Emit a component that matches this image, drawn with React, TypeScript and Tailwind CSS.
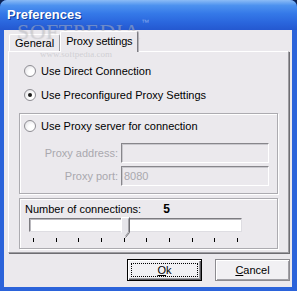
import React from "react";

const font = { fontFamily: '"Liberation Sans", Arial, sans-serif' };

function Radio({ label, checked }: { label: string; checked?: boolean }) {
  return (
    <div className="flex items-center h-[16px]">
      <span className="relative w-[12px] h-[12px] rounded-full border border-[#8f8e94] bg-[radial-gradient(circle_at_65%_65%,#ffffff_30%,#dcdbe0_100%)] flex items-center justify-center">
        {checked && <span className="w-[4px] h-[4px] rounded-full bg-[#1c1c1c]" />}
      </span>
      <span className="ml-[5px] text-[11px] text-black">{label}</span>
    </div>
  );
}

function Field({ label, value }: { label: string; value?: string }) {
  return (
    <div className="flex items-center h-[20px]">
      <span className="w-[107px] text-right text-[11px] text-[#a9a8ad] pr-[1px]">{label}</span>
      <div className="ml-[2px] w-[148px] h-[20px] border border-t-[#87868b] border-l-[#87868b] border-r-white border-b-white shadow-[inset_1px_1px_0_#c9c8cd] bg-[#ebe9ed] flex items-center pl-[2px] text-[11px] text-[#a9a8ad]">
        {value}
      </div>
    </div>
  );
}

export default function App() {
  const ticks = Array.from({ length: 10 });
  return (
    <div className="w-[297px] h-[291px] bg-[#0d2456] overflow-hidden" style={font}>
      <div className="relative w-full h-full flex flex-col rounded-t-[7px] bg-[#2b63da] overflow-hidden">
        {/* title bar */}
        <div className="h-[30px] flex items-center pl-[7px] bg-[linear-gradient(to_bottom,#8cbcf6_0%,#4d92ef_18%,#3579e8_45%,#2a66dd_75%,#2458d0_100%)]">
          <span className="text-white font-bold text-[13px] [text-shadow:1px_1px_0_#0b3a9c]">Preferences</span>
        </div>

        {/* client */}
        <div className="flex-1 ml-[4px] mr-[5px] mb-[4px] bg-[#ebe9ed] flex flex-col">
          {/* tab strip */}
          <div className="h-[21px] flex items-end pl-[5px]">
            <div className="h-[17px] px-[5px] flex items-center border border-b-0 border-t-white border-l-white border-r-[#9d9ca1] rounded-t-[2px] text-[11px] text-black">
              General
            </div>
            <div className="relative z-10 h-[21px] -mb-[1px] px-[5px] pb-[2px] flex items-center border border-b-0 border-t-white border-l-white border-r-[#7d7c82] shadow-[1px_0_0_#b5b4b9] rounded-t-[2px] bg-[#ebe9ed] text-[11px] text-black tracking-[-0.2px]">
              Proxy settings
            </div>
          </div>

          {/* tab page */}
          <div className="ml-[4px] mr-[3px] h-[202px] border border-t-white border-l-white border-r-[#9d9ca1] border-b-[#9d9ca1] shadow-[1px_1px_0_#6e6d72] flex flex-col">
            <div className="ml-[15px] mt-[11px]">
              <Radio label="Use Direct Connection" />
            </div>
            <div className="ml-[15px] mt-[8px]">
              <Radio label="Use Preconfigured Proxy Settings" checked />
            </div>

            <div className="ml-[10px] mt-[10px] w-[259px] h-[81px] border border-[#acabb0] shadow-[inset_1px_1px_0_#fff,1px_1px_0_#fff] flex flex-col">
              <div className="ml-[4px] mt-[4px]">
                <Radio label="Use Proxy server for connection" />
              </div>
              <div className="mt-[9px] ml-[-8px] flex flex-col gap-[3px]">
                <Field label="Proxy address:" />
                <Field label="Proxy port:" value="8080" />
              </div>
            </div>

            <div className="ml-[10px] mt-[4px] w-[259px] h-[51px] border border-[#acabb0] shadow-[inset_1px_1px_0_#fff,1px_1px_0_#fff] flex flex-col">
              <div className="h-[14px] mt-[3px] ml-[5px] flex items-center text-[11px] text-black">
                <span>Number of connections:</span>
                <span className="ml-[22px] font-bold text-[12px]">5</span>
              </div>
              <div className="relative ml-[9px] mt-[2px] w-[213px] h-[14px] bg-white border border-t-[#7c7b80] border-l-[#7c7b80] border-r-[#dedde2] border-b-[#dedde2] shadow-[inset_1px_1px_0_#b9b8bd]">
                <svg className="absolute left-[91px] top-[-2px]" width="9" height="21" viewBox="0 0 9 21">
                  <path d="M0.5 0.5 H8.5 V15.5 L4.5 20.5 L0.5 15.5 Z" fill="#e6e5ea" />
                  <path d="M0.5 15.5 V0.5 H8" fill="none" stroke="#ffffff" />
                  <path d="M8.5 0.5 V15.5 L4.5 20.5" fill="none" stroke="#6f6e73" />
                  <path d="M7.5 1.5 V15 L4.5 19" fill="none" stroke="#a3a2a7" />
                </svg>
              </div>
              <div className="ml-[13px] mt-[6px] w-[205px] h-[4px] flex justify-between">
                {ticks.map((_, i) => (
                  <span key={i} className="w-px h-[4px] bg-black" />
                ))}
              </div>
            </div>
          </div>

          {/* buttons */}
          <div className="mt-[6px] flex justify-end gap-[13px] pr-[2px]">
            <button className="w-[75px] h-[22px] border border-black bg-[#f1f0f3] shadow-[inset_1px_1px_0_#fff,inset_-1px_-1px_0_#5a595e,inset_-2px_-2px_0_#a2a1a6] p-[3px] text-[11px] text-black">
              <span className="w-full h-full flex items-center justify-center border border-dotted border-black">
                <span>
                  <span className="underline">O</span>k
                </span>
              </span>
            </button>
            <button className="w-[75px] h-[22px] border border-[#8c8b90] bg-[#f1f0f3] shadow-[inset_1px_1px_0_#fff,inset_-1px_-1px_0_#a2a1a6] flex items-center justify-center text-[11px] text-black">
              <span>
                <span className="underline">C</span>ancel
              </span>
            </button>
          </div>
        </div>

        {/* watermark */}
        <div className="absolute left-[17px] top-[15px] pointer-events-none text-[22px] tracking-[0.5px] text-white/30 [text-shadow:0_0_1px_rgba(90,90,100,0.35)]" style={{ fontFamily: '"Liberation Serif", serif' }}>
          SOFTPEDIA
        </div>
        <div className="absolute left-[141px] top-[17px] pointer-events-none text-[8px] text-white/40">™</div>
        <div className="absolute left-[40px] top-[48px] pointer-events-none text-[9px] text-[#c4c3c8]/70" style={{ fontFamily: '"Liberation Serif", serif' }}>
          www.softpedia.com
        </div>
      </div>
    </div>
  );
}
